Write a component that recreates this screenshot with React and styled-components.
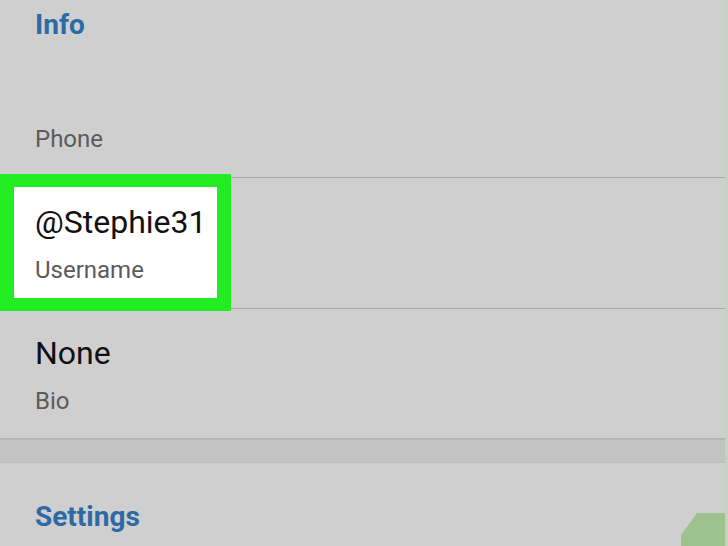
import React from "react";
import styled, { createGlobalStyle } from "styled-components";

const Global = createGlobalStyle`
  html, body { margin: 0; padding: 0; background: #cfcfcf; }
  body { font-family: Roboto, "Liberation Sans", sans-serif; }
`;

const Screen = styled.div`
  position: relative;
  width: 728px;
  height: 546px;
  overflow: hidden;
  background: #cfcfcf;
  display: flex;
  flex-direction: column;
  box-sizing: border-box;
  border-right: 3px solid #c7d2c5;
`;

const SectionTitle = styled.div`
  box-sizing: border-box;
  height: ${(p) => p.$height}px;
  flex-shrink: 0;
  padding: ${(p) => p.$top}px 0 0 35px;
  font-size: 28px;
  line-height: 34px;
  font-weight: 700;
  color: #2c6aa6;
`;

const Row = styled.div`
  position: relative;
  box-sizing: border-box;
  flex-shrink: 0;
  height: ${(p) => (p.$last ? 129 : 131)}px;
  padding: 25px 0 0 35px;
  border-bottom: ${(p) => (p.$last ? "none" : "1px solid #a9a9a9")};
  display: flex;
  flex-direction: column;
  gap: 15px;
`;

const Value = styled.div`
  position: relative;
  z-index: 1;
  height: 38px;
  font-size: 32px;
  line-height: 38px;
  color: #111;
`;

const Label = styled.div`
  position: relative;
  z-index: 1;
  font-size: 24px;
  line-height: 28px;
  color: #5b5b5b;
`;

const Highlight = styled.div`
  position: absolute;
  left: 0;
  top: -4px;
  width: 231px;
  height: 137px;
  box-sizing: border-box;
  border: solid #22ec22;
  border-width: 13px 14px 13px 14px;
  background: #fff;
  z-index: 0;
`;

const Band = styled.div`
  flex-shrink: 0;
  height: 22px;
  background: #c3c3c3;
  border-top: 2px solid #b5b5b5;
  border-bottom: 1px solid #bcbcbc;
`;

const Fab = styled.svg`
  position: absolute;
  right: 0;
  bottom: 0;
  width: 44px;
  height: 33px;
`;

const rows = [
  { value: "", label: "Phone" },
  { value: "@Stephie31", label: "Username", highlight: true },
  { value: "None", label: "Bio", last: true },
];

export default function App() {
  return (
    <>
      <Global />
      <Screen>
        <SectionTitle $height={47} $top={8}>Info</SectionTitle>
        {rows.map((r) => (
          <Row key={r.label} $last={r.last}>
            {r.highlight && <Highlight />}
            <Value>{r.value}</Value>
            <Label>{r.label}</Label>
          </Row>
        ))}
        <Band />
        <SectionTitle $height={83} $top={37}>Settings</SectionTitle>
        <Fab viewBox="0 0 44 33">
          <polygon points="16,0 44,0 44,33 0,33 0,22" fill="#9dc28d" />
        </Fab>
      </Screen>
    </>
  );
}
